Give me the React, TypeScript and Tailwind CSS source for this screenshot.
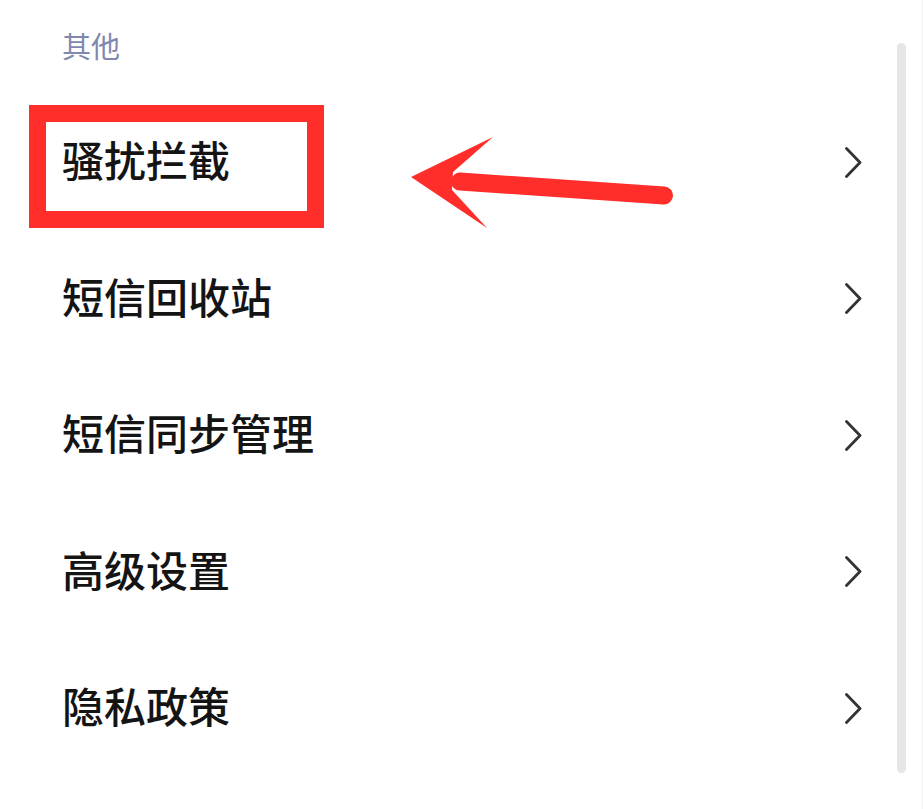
const items = ['骚扰拦截', '短信回收站', '短信同步管理', '高级设置', '隐私政策'];

const Chevron = () => (
  <svg width="17" height="31" viewBox="0 0 17 31" fill="none" className="shrink-0">
    <path d="M1.5 1.5 L15 15.5 L1.5 29.5" stroke="#333333" strokeWidth="2.8" strokeLinecap="round" strokeLinejoin="round" />
  </svg>
);

const App = () => {
  return (
    <div
      className="relative w-[923px] h-[809px] bg-white overflow-hidden"
      style={{ fontFamily: '"Noto Sans CJK SC", "Noto Sans", sans-serif' }}
    >
      <div className="h-[94px] pl-[62px] pt-[27px] text-[29px] leading-[36px] text-[#8088b0]">其他</div>

      <div className="flex flex-col">
        {items.map((label) => (
          <div key={label} className="h-[136.5px] flex items-center justify-between pl-[62px] pr-[61px]">
            <span className="mb-[6px] text-[42px] leading-none font-medium text-[#141414]">{label}</span>
            <Chevron />
          </div>
        ))}
      </div>

      {/* scrollbar */}
      <div className="absolute left-[897px] top-[43px] w-[9px] h-[730px] rounded-full bg-[#e6e6e6]" />
      <div className="absolute right-0 top-0 w-px h-full bg-[#f3f3f3]" />

      {/* annotation: red box */}
      <div className="absolute left-[29px] top-[105px] w-[295px] h-[123px] border-[17px] border-[#ff2e2b]" />

      {/* annotation: arrow */}
      <svg className="absolute left-0 top-0" width="923" height="809" viewBox="0 0 923 809">
        <line x1="460" y1="181.5" x2="664" y2="195.5" stroke="#ff2e2b" strokeWidth="18" strokeLinecap="round" />
        <polygon points="411,177 493,137 453,172 452,190 487,228" fill="#ff2e2b" />
      </svg>
    </div>
  );
};

export default App;
